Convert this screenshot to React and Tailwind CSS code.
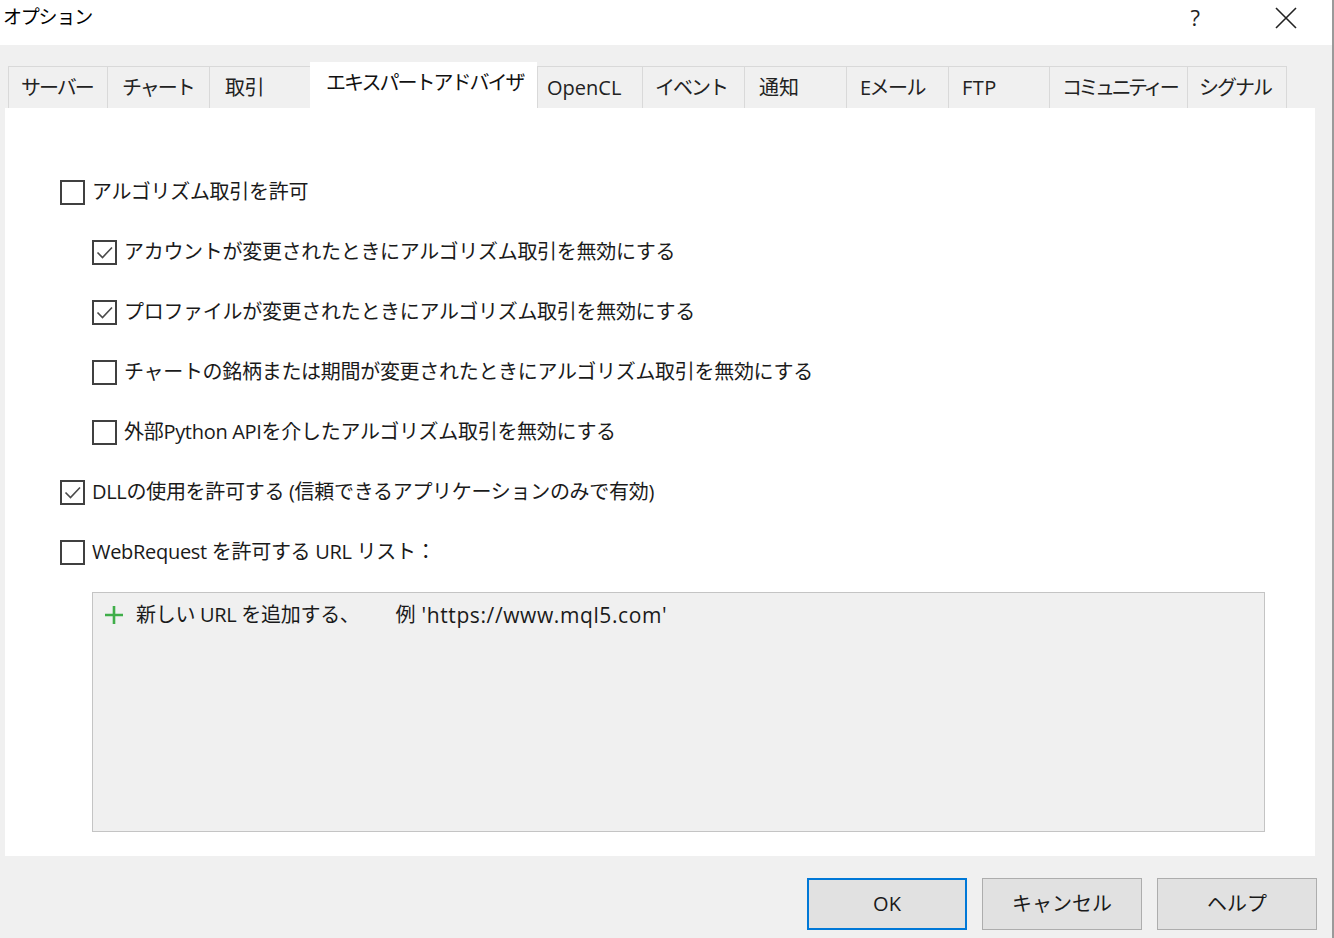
import React from "react";

const font = {
  fontFamily: '"Open Sans", "Noto Sans CJK JP", "Noto Sans", sans-serif',
};

const tabs = [
  { label: "サーバー", w: "w-[99px]", p: "pl-[12px] tracking-[-2px]" },
  { label: "チャート", w: "w-[102px]", p: "pl-[14px] tracking-[-2px]" },
  { label: "取引", w: "w-[101px]", p: "pl-[15px] tracking-[-0.5px]" },
  { label: "エキスパートアドバイザ", w: "w-[227px]", p: "pl-[16px] tracking-[-2px]", active: true },
  { label: "OpenCL", w: "w-[105px]", p: "pl-[9px] tracking-[0px]" },
  { label: "イベント", w: "w-[102px]", p: "pl-[12px] tracking-[-2px]" },
  { label: "通知", w: "w-[102px]", p: "pl-[14px] tracking-[0px]" },
  { label: "Eメール", w: "w-[102px]", p: "pl-[13px] tracking-[-1.5px]" },
  { label: "FTP", w: "w-[101px]", p: "pl-[13px] tracking-[0.5px]" },
  { label: "コミュニティー", w: "w-[138px]", p: "pl-[12px] tracking-[-3.5px]" },
  { label: "シグナル", w: "w-[100px]", p: "pl-[11px] tracking-[-2px]" },
];

function Box({ checked }) {
  return (
    <span className="w-[25px] h-[25px] border-2 border-[#404040] bg-white flex items-center justify-center shrink-0">
      {checked && (
        <svg width="19" height="19" viewBox="0 0 19 19">
          <path d="M2.5 9.5 L7.5 14.5 L17 4.5" fill="none" stroke="#4a4a4a" strokeWidth="1.6" />
        </svg>
      )}
    </span>
  );
}

function Row({ checked, indent, children }) {
  return (
    <div className={`h-[60px] flex items-center ${indent ? "pl-[32px]" : ""}`}>
      <Box checked={checked} />
      <span className="ml-[7px] text-[20px] tracking-[-0.3px] text-[#1a1a1a] whitespace-nowrap leading-none">{children}</span>
    </div>
  );
}

function Btn({ children, primary }) {
  return (
    <div
      className={`w-[160px] h-[52px] flex items-center justify-center bg-[#e1e1e1] text-[20px] text-[#1a1a1a] ${
        primary ? "border-2 border-[#0078d7]" : "border border-[#adadad]"
      }`}
    >
      {children}
    </div>
  );
}

export default function App() {
  return (
    <div style={font} className="w-[1334px] h-[938px] bg-white border-r-2 border-[#9a9a9a] flex flex-col overflow-hidden">
      {/* title bar */}
      <div className="h-[45px] bg-white flex items-center shrink-0 pb-[10px]">
        <span className="ml-[3px] text-[19px] tracking-[-1.2px] text-black">オプション</span>
        <span className="ml-auto text-[22px] text-[#222]">?</span>
        <span className="ml-[74px] mr-[34px] w-[24px] h-[24px] flex items-center justify-center">
          <svg width="22" height="22" viewBox="0 0 22 22">
            <path d="M1 1 L21 21 M21 1 L1 21" stroke="#222" strokeWidth="1.6" />
          </svg>
        </span>
      </div>

      {/* body */}
      <div className="flex-1 bg-[#f0f0f0] flex flex-col pt-[17px]">
        {/* tabs */}
        <div className="flex items-end pl-[8px] h-[46px]">
          {tabs.map((t) =>
            t.active ? (
              <div
                key={t.label}
                className={`${t.w} ${t.p} h-[46px] bg-white flex items-center text-[20px] text-[#111] pb-[4px] whitespace-nowrap`}
              >
                {t.label}
              </div>
            ) : (
              <div
                key={t.label}
                className={`${t.w} ${t.p} h-[42px] border-t border-l border-[#d9d9d9] last:border-r flex items-center text-[20px] text-[#222] whitespace-nowrap overflow-hidden`}
              >
                {t.label}
              </div>
            )
          )}
        </div>

        {/* panel */}
        <div className="ml-[5px] w-[1310px] h-[748px] bg-white pt-[54px] pl-[55px]">
          <Row>アルゴリズム取引を許可</Row>
          <Row checked indent>アカウントが変更されたときにアルゴリズム取引を無効にする</Row>
          <Row checked indent>プロファイルが変更されたときにアルゴリズム取引を無効にする</Row>
          <Row indent>チャートの銘柄または期間が変更されたときにアルゴリズム取引を無効にする</Row>
          <Row indent>外部Python APIを介したアルゴリズム取引を無効にする</Row>
          <Row checked>DLLの使用を許可する (信頼できるアプリケーションのみで有効)</Row>
          <Row>WebRequest を許可する URL リスト：</Row>

          <div className="mt-[10px] ml-[32px] w-[1173px] h-[240px] bg-[#f0f0f0] border border-[#c4c4c4] pt-[9px] pl-[11px]">
            <div className="flex items-center h-[26px]">
              <svg width="20" height="20" viewBox="0 0 20 20">
                <path d="M10 1 V19 M1 10 H19" stroke="#3fae49" strokeWidth="2.6" />
              </svg>
              <span className="ml-[12px] text-[20px] tracking-[-0.3px] text-[#1a1a1a] whitespace-nowrap leading-none">
                新しい URL を追加する、
              </span>
              <span className="ml-[36px] text-[20px] text-[#1a1a1a] whitespace-nowrap leading-none">例</span>
              <span className="ml-[6px] text-[21px] tracking-[0.6px] text-[#1a1a1a] whitespace-nowrap leading-none">
                'https://www.mql5.com'
              </span>
            </div>
          </div>
        </div>

        {/* buttons */}
        <div className="flex justify-end gap-[15px] pr-[15px] mt-[22px]">
          <Btn primary>OK</Btn>
          <Btn>キャンセル</Btn>
          <Btn>ヘルプ</Btn>
        </div>
      </div>
    </div>
  );
}
